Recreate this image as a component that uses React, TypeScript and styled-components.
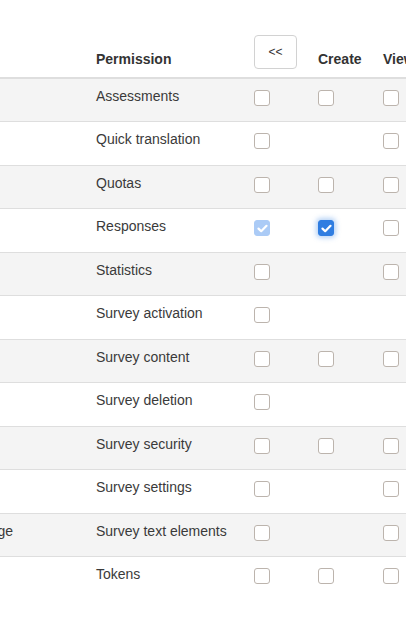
import React from 'react';
import styled, { createGlobalStyle, css } from 'styled-components';

const GlobalStyle = createGlobalStyle`
  html, body {
    margin: 0;
    padding: 0;
    background: #fff;
  }
  body {
    font-family: "Liberation Sans", Arial, sans-serif;
    font-size: 14px;
    line-height: 20px;
    color: #3a3a3a;
  }
`;

const Viewport = styled.div`
  width: 406px;
  height: 637px;
  overflow: hidden;
  padding-top: 27px;
  box-sizing: border-box;
`;

const Table = styled.table`
  border-collapse: collapse;
  table-layout: fixed;
  margin-left: -200px;
  width: 800px;
`;

const HeadCell = styled.th<{ w: number }>`
  box-sizing: border-box;
  width: ${p => p.w}px;
  padding: 8px;
  text-align: left;
  vertical-align: bottom;
  font-weight: bold;
  color: #333;
  white-space: nowrap;
  border-bottom: 2px solid #dedede;
`;

const Row = styled.tr<{ striped: boolean }>`
  height: 43.5px;
  background: ${p => (p.striped ? '#f4f4f4' : '#fff')};
  border-top: 1px solid #dedede;
`;

const Cell = styled.td`
  box-sizing: border-box;
  padding: 7px 8px 0;
  vertical-align: top;
  white-space: nowrap;
`;

const DescCell = styled(Cell)`
  text-align: right;
  padding-right: 75px;
  overflow: hidden;
`;

const CollapseButton = styled.button`
  width: 43px;
  height: 34px;
  padding: 0;
  border: 1px solid #d2d2d2;
  border-radius: 4px;
  background: #fff;
  color: #333;
  font-family: "Liberation Sans", Arial, sans-serif;
  font-size: 12px;
  line-height: 1;
  display: block;
`;

type BoxState = 'empty' | 'checked' | 'disabled';

const Box = styled.span<{ state: BoxState }>`
  display: flex;
  align-items: center;
  justify-content: center;
  width: 16px;
  height: 16px;
  margin-top: 4px;
  box-sizing: border-box;
  border-radius: 3px;
  border: 1px solid #bcb4ad;
  background: #fff;
  ${p =>
    p.state === 'checked' &&
    css`
      border-color: #2f7de1;
      background: #2f7de1;
      box-shadow: 0 0 5px 2px rgba(47, 125, 225, 0.35);
    `}
  ${p =>
    p.state === 'disabled' &&
    css`
      border-color: #abcbf6;
      background: #abcbf6;
    `}
`;

const Check = () => (
  <svg width="11" height="9" viewBox="0 0 11 9">
    <path d="M1.5 4.6 L4.2 7.2 L9.5 1.8" fill="none" stroke="#fff" strokeWidth="2.2" strokeLinecap="round" strokeLinejoin="round" />
  </svg>
);

const CheckBox = ({ state = 'empty' }: { state?: BoxState }) => (
  <Box state={state}>{state !== 'empty' ? <Check /> : null}</Box>
);

interface IPermission {
  name: string;
  desc?: string;
  all: BoxState;
  create: BoxState | null;
  view: BoxState | null;
}

const permissions: IPermission[] = [
  { name: 'Assessments', all: 'empty', create: 'empty', view: 'empty' },
  { name: 'Quick translation', all: 'empty', create: null, view: 'empty' },
  { name: 'Quotas', all: 'empty', create: 'empty', view: 'empty' },
  { name: 'Responses', all: 'disabled', create: 'checked', view: 'empty' },
  { name: 'Statistics', all: 'empty', create: null, view: 'empty' },
  { name: 'Survey activation', all: 'empty', create: null, view: null },
  { name: 'Survey content', all: 'empty', create: 'empty', view: 'empty' },
  { name: 'Survey deletion', all: 'empty', create: null, view: null },
  { name: 'Survey security', all: 'empty', create: 'empty', view: 'empty' },
  { name: 'Survey settings', all: 'empty', create: null, view: 'empty' },
  { name: 'Survey text elements', desc: 'Edit texts per language', all: 'empty', create: null, view: 'empty' },
  { name: 'Tokens', all: 'empty', create: 'empty', view: 'empty' }
];

export default function App() {
  return (
    <>
      <GlobalStyle />
      <Viewport>
        <Table>
          <thead>
            <tr>
              <HeadCell w={288} />
              <HeadCell w={158}>Permission</HeadCell>
              <HeadCell w={64}>
                <CollapseButton>&lt;&lt;</CollapseButton>
              </HeadCell>
              <HeadCell w={65}>Create</HeadCell>
              <HeadCell w={225}>View/read</HeadCell>
            </tr>
          </thead>
          <tbody>
            {permissions.map((p, i) => (
              <Row key={p.name} striped={i % 2 === 0}>
                <DescCell>{p.desc}</DescCell>
                <Cell>{p.name}</Cell>
                <Cell>
                  <CheckBox state={p.all} />
                </Cell>
                <Cell>{p.create ? <CheckBox state={p.create} /> : null}</Cell>
                <Cell>{p.view ? <CheckBox state={p.view} /> : null}</Cell>
              </Row>
            ))}
          </tbody>
        </Table>
      </Viewport>
    </>
  );
}
